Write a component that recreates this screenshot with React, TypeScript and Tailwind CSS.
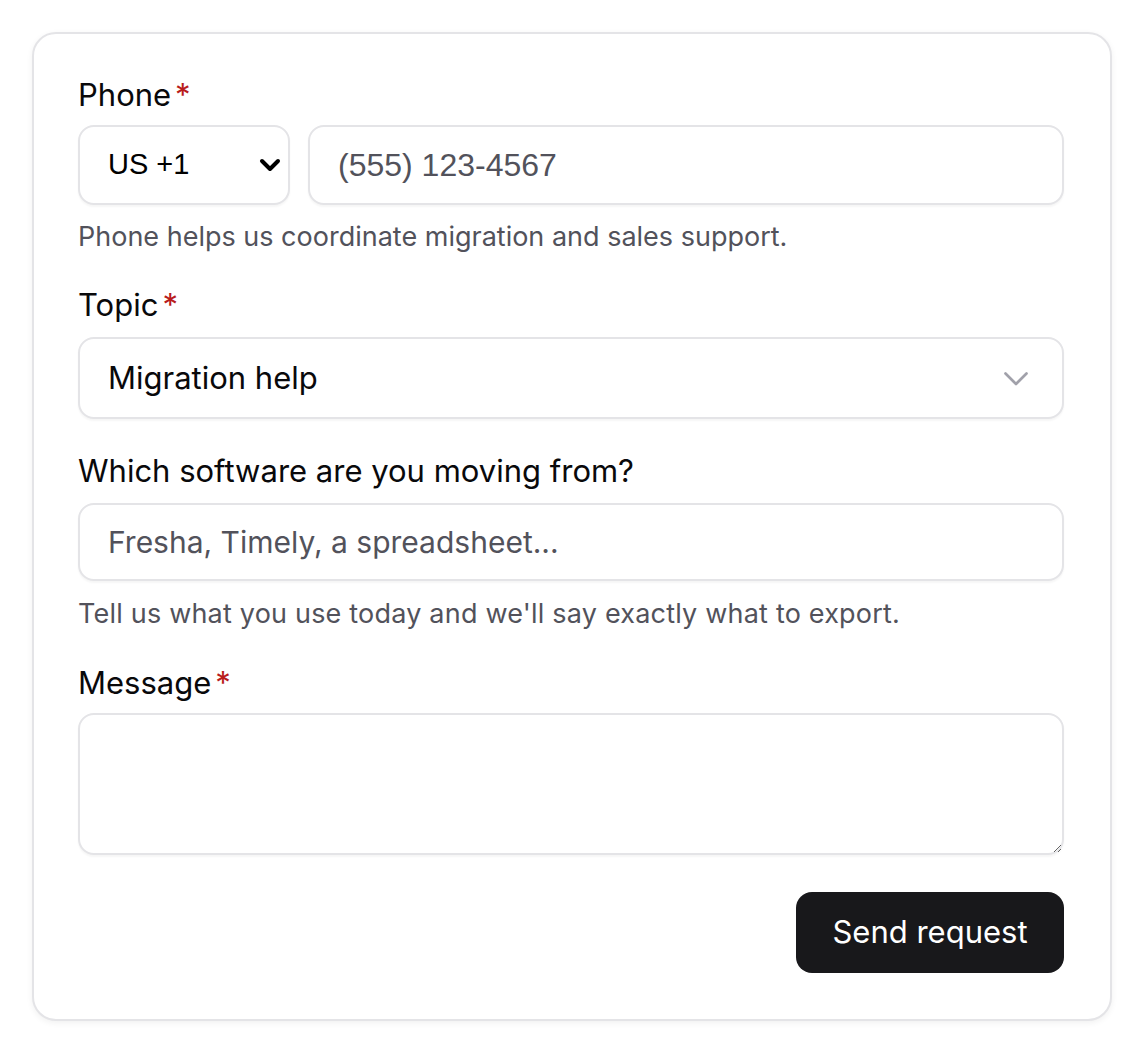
import React from "react";

const F = { fontFamily: "Inter, 'Liberation Sans', sans-serif" };
const A = { fontFamily: "'Liberation Sans', Arial, sans-serif" };

function Label({ text, req, className = "" }: { text: string; req?: boolean; className?: string }) {
  return (
    <div className={"h-[48px] leading-[48px] text-[31px] text-[#09090b] " + className}>
      {text}
      {req && <span className="ml-[4px] text-[#b91c1c]">*</span>}
    </div>
  );
}

export default function App() {
  return (
    <div className="min-h-[1052px] bg-white pt-[32px] px-[32px]" style={F}>
      <div className="w-[1080px] rounded-[24px] border-2 border-[#e4e4e7] bg-white pl-[44px] pr-[46px] pt-[37px] pb-[46px] shadow-[0_2px_6px_rgba(0,0,0,0.06)]">
        <Label text="Phone" req />
        <div className="mt-[6px] flex h-[80px] gap-[18px]">
          <div className="relative h-[80px] w-[212px] shrink-0">
            <select
              className="h-[80px] w-full appearance-none rounded-[16px] border-2 border-[#e4e4e7] bg-white pl-[28px] pr-[14px] text-[29px] text-black shadow-[0_2px_2px_rgba(0,0,0,0.04)] outline-none"
              style={A}
              defaultValue="US"
            >
              <option value="US">US +1</option>
            </select>
            <svg
              className="pointer-events-none absolute right-[8px] top-[28px]"
              width="24"
              height="24"
              viewBox="0 0 24 24"
              fill="none"
              stroke="#000"
              strokeWidth="4"
              strokeLinecap="round"
              strokeLinejoin="round"
            >
              <path d="M4 8l8 8 8-8" />
            </svg>
          </div>
          <input
            className="h-[80px] flex-1 rounded-[16px] border-2 border-[#e4e4e7] bg-white px-[28px] text-[32px] text-black placeholder:text-[#52525b] shadow-[0_2px_2px_rgba(0,0,0,0.04)] outline-none"
            style={A}
            placeholder="(555) 123-4567"
          />
        </div>
        <div className="mt-[12px] h-[40px] leading-[40px] text-[27px] text-[#52525b]">
          Phone helps us coordinate migration and sales support.
        </div>

        <Label text="Topic" req className="mt-[24px]" />
        <div className="relative mt-[8px] flex h-[82px] items-center rounded-[16px] border-2 border-[#e4e4e7] bg-white pl-[28px] pr-[28px] shadow-[0_2px_2px_rgba(0,0,0,0.04)]">
          <span className="flex-1 text-[31px] text-[#09090b]">Migration help</span>
          <svg width="36" height="36" viewBox="0 0 24 24" fill="none" stroke="#a1a1aa" strokeWidth="1.8" strokeLinecap="round" strokeLinejoin="round">
            <path d="M5 9l7 7 7-7" />
          </svg>
        </div>

        <Label text="Which software are you moving from?" className="mt-[28px]" />
        <input
          className="mt-[8px] block h-[78px] w-full rounded-[16px] border-2 border-[#e4e4e7] bg-white px-[28px] text-[30px] text-black placeholder:text-[#52525b] shadow-[0_2px_2px_rgba(0,0,0,0.04)] outline-none"
          placeholder="Fresha, Timely, a spreadsheet..."
        />
        <div className="mt-[13px] h-[40px] leading-[40px] text-[27px] tracking-[0.2px] text-[#52525b]">
          Tell us what you use today and we'll say exactly what to export.
        </div>

        <Label text="Message" req className="mt-[25px]" />
        <textarea className="mt-[6px] block h-[142px] w-full rounded-[16px] border-2 border-[#e4e4e7] bg-white px-[28px] py-[16px] text-[31px] shadow-[0_2px_2px_rgba(0,0,0,0.04)] outline-none" />

        <div className="mt-[37px] flex justify-end">
          <button className="h-[81px] w-[268px] rounded-[16px] bg-[#18181b] text-[31px] text-white">
            Send request
          </button>
        </div>
      </div>
    </div>
  );
}
